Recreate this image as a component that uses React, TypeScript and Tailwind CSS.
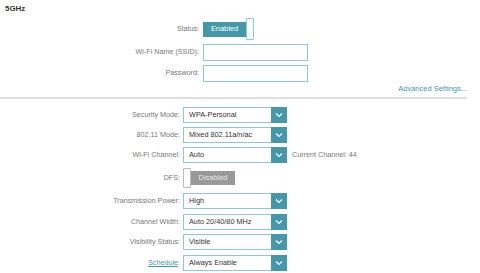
import React from "react";

const font = { fontFamily: '"Liberation Sans", Arial, sans-serif' };

function Chevron() {
  return (
    <svg width="8" height="6" viewBox="0 0 8 6" className="block">
      <polyline points="1,1.5 4,4.5 7,1.5" fill="none" stroke="white" strokeWidth="1.2" />
    </svg>
  );
}

function Select({ value }: { value: string }) {
  return (
    <div className="flex h-[16px] w-[104px] border border-[#8fc7d3] bg-white">
      <div className="flex-1 flex items-center pl-[5px] text-[7.3px] text-[#333]">{value}</div>
      <div className="w-[16px] -my-px -mr-px flex items-center justify-center bg-[#4598aa]">
        <Chevron />
      </div>
    </div>
  );
}

function Row({ label, children, mt, link }: { label: string; children: React.ReactNode; mt: string; link?: boolean }) {
  return (
    <div className={`flex items-center ${mt}`}>
      <div className="w-[183px] pr-[3px] text-right text-[7.2px] text-[#777]">
        {link ? (
          <span className="text-[#4598aa] underline">{label}</span>
        ) : (
          label
        )}
        {":"}
      </div>
      {children}
    </div>
  );
}

export default function App() {
  return (
    <div className="w-[480px] h-[273px] bg-white overflow-hidden" style={font}>
      <div className="h-[18px] pl-[5px] pt-[5px] text-[7.9px] font-bold text-[#333] leading-none">5GHz</div>
      {/* Status */}
      <div className="flex items-center h-[22px]">
        <div className="w-[199px] text-right text-[7.2px] text-[#777]">Status:</div>
        <div className="ml-[4px] flex items-center">
          <div className="w-[43px] h-[15px] bg-[#4598aa] text-white text-[7.4px] flex items-center justify-center">Enabled</div>
          <div className="w-[8px] h-[22px] border border-[#8fc7d3] rounded-[1px] bg-white"></div>
        </div>
      </div>
      <div className="flex items-center h-[17px] mt-[4px]">
        <div className="w-[199px] text-right text-[7.2px] text-[#777]">Wi-Fi Name (SSID):</div>
        <div className="ml-[4px] w-[105px] h-[17px] border border-[#8fc7d3]"></div>
      </div>
      <div className="flex items-center h-[17px] mt-[4px]">
        <div className="w-[199px] text-right text-[7.2px] text-[#777]">Password:</div>
        <div className="ml-[4px] w-[105px] h-[17px] border border-[#8fc7d3]"></div>
      </div>
      <div className="flex justify-end w-[467px] h-[10px] mt-[2px] text-[7.5px] text-[#4598aa] leading-[10px]">
        Advanced Settings...
      </div>
      <div className="w-[467px] h-[2px] mt-[3px] bg-[#dedede]"></div>

      <Row label="Security Mode" mt="mt-[8px]"><Select value="WPA-Personal" /></Row>
      <Row label="802.11 Mode" mt="mt-[4px]"><Select value="Mixed 802.11a/n/ac" /></Row>
      <Row label="Wi-Fi Channel" mt="mt-[4px]">
        <Select value="Auto" />
        <div className="ml-[5px] text-[7.2px] text-[#777]">Current Channel: 44</div>
      </Row>
      <div className="flex items-center mt-[5px] h-[20px]">
        <div className="w-[183px] pr-[3px] text-right text-[7.2px] text-[#777]">DFS:</div>
        <div className="flex items-center">
          <div className="w-[8px] h-[20px] border border-[#bbb] rounded-[1px] bg-white"></div>
          <div className="w-[44px] h-[14px] bg-[#999] text-[#e6e6e6] text-[7.4px] flex items-center justify-center">Disabled</div>
        </div>
      </div>
      <Row label="Transmission Power" mt="mt-[5px]"><Select value="High" /></Row>
      <Row label="Channel Width" mt="mt-[5px]"><Select value="Auto 20/40/80 MHz" /></Row>
      <Row label="Visibility Status" mt="mt-[4px]"><Select value="Visible" /></Row>
      <Row label="Schedule" link mt="mt-[5px]"><Select value="Always Enable" /></Row>
    </div>
  );
}
